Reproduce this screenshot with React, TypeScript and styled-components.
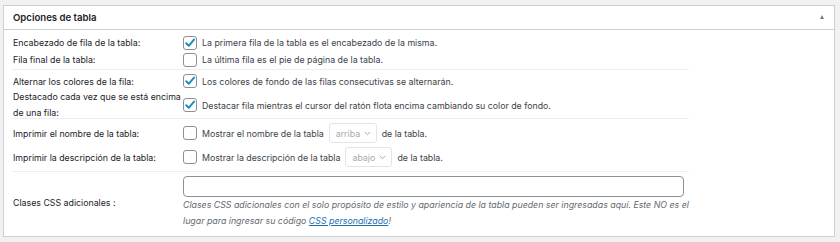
import React from "react";
import styled, { createGlobalStyle } from "styled-components";

const Global = createGlobalStyle`
  html, body { margin: 0; padding: 0; background: #f1f1f1; }
  body { font-family: Inter, "Liberation Sans", Arial, sans-serif; font-size: 8.8px; color: #3c434a; }
  #root { width: 840px; height: 242px; }
`;

const Panel = styled.section`
  margin: 5px 5px 0 3px;
  background: #fff;
  border: 1px solid #ccd0d4;
  box-sizing: border-box;
  height: 232px;
  overflow: hidden;
`;

const Header = styled.header`
  height: 23px;
  border-bottom: 1px solid #ccd0d4;
  display: flex;
  align-items: center;
  justify-content: space-between;
  padding: 0 10px 0 9px;
`;

const Title = styled.h2`
  margin: 0;
  font-size: 9.6px;
  font-weight: 600;
  color: #1d2327;
`;

const Toggle = styled.span`
  width: 0;
  height: 0;
  border-left: 2.5px solid transparent;
  border-right: 2.5px solid transparent;
  border-bottom: 4px solid #787c82;
  margin-top: -1px;
`;

const Body = styled.div`
  padding: 0 0 0 8px;
`;

const Group = styled.div<{ $pt: number; $pb: number; $gap?: number; $last?: boolean }>`
  width: 677px;
  padding: ${(p) => p.$pt}px 0 ${(p) => p.$pb}px;
  border-bottom: ${(p) => (p.$last ? "none" : "1px solid #eeeeee")};
  display: flex;
  flex-direction: column;
  gap: ${(p) => p.$gap ?? 0}px;
`;

const Row = styled.div<{ $h?: number }>`
  display: grid;
  grid-template-columns: 171px 1fr;
  align-items: center;
  height: ${(p) => p.$h ?? 17}px;
`;

const Label = styled.div<{ $lh?: number }>`
  padding-left: 1px;
  color: #1d2327;
  white-space: nowrap;
  line-height: ${(p) => p.$lh ?? 15}px;
`;

const Control = styled.div`
  display: flex;
  align-items: center;
  gap: 5px;
  white-space: nowrap;
`;

const Box = styled.span`
  width: 14px;
  height: 14px;
  box-sizing: border-box;
  border: 1px solid #8c8f94;
  border-radius: 3px;
  background: #fff;
  display: inline-flex;
  align-items: center;
  justify-content: center;
  flex: none;
`;

const Select = styled.span<{ $w: number }>`
  width: ${(p) => p.$w}px;
  height: 20px;
  box-sizing: border-box;
  border: 1px solid #e2e4e7;
  border-radius: 3px;
  display: inline-flex;
  align-items: center;
  justify-content: space-between;
  padding: 0 5px 0 6px;
  color: #a7aaad;
`;

const Column = styled.div`
  display: flex;
  flex-direction: column;
`;

const Input = styled.div`
  width: 501px;
  height: 21px;
  box-sizing: border-box;
  border: 1px solid #8c8f94;
  border-radius: 4px;
  background: #fff;
`;

const Help = styled.p`
  margin: 0;
  font-style: italic;
  color: #646970;
  line-height: 16px;
  white-space: nowrap;
`;

const Link = styled.a`
  color: #2271b1;
  text-decoration: underline;
`;

const Check = ({ on }: { on?: boolean }) => (
  <Box>
    {on && (
      <svg width="12" height="12" viewBox="0 0 12 12">
        <path d="M2.2 6.2 L4.8 8.8 L10 2.6" fill="none" stroke="#1e8cbe" strokeWidth="2" strokeLinecap="round" strokeLinejoin="round" />
      </svg>
    )}
  </Box>
);

const Chevron = () => (
  <svg width="7" height="5" viewBox="0 0 7 5">
    <path d="M0.8 1 L3.5 3.7 L6.2 1" fill="none" stroke="#a7aaad" strokeWidth="1" />
  </svg>
);

export default function App() {
  return (
    <>
      <Global />
      <Panel>
        <Header>
          <Title>Opciones de tabla</Title>
          <Toggle />
        </Header>
        <Body>
          <Group $pt={4} $pb={1}>
            <Row>
              <Label>Encabezado de fila de la tabla:</Label>
              <Control>
                <Check on />
                <span>La primera fila de la tabla es el encabezado de la misma.</span>
              </Control>
            </Row>
            <Row>
              <Label>Fila final de la tabla:</Label>
              <Control>
                <Check />
                <span>La última fila es el pie de página de la tabla.</span>
              </Control>
            </Row>
          </Group>
          <Group $pt={3} $pb={0}>
            <Row $h={16}>
              <Label>Alternar los colores de la fila:</Label>
              <Control>
                <Check on />
                <span>Los colores de fondo de las filas consecutivas se alternarán.</span>
              </Control>
            </Row>
            <Row $h={29}>
              <Label $lh={16}>
                Destacado cada vez que se está encima
                <br />
                de una fila:
              </Label>
              <Control>
                <Check on />
                <span>Destacar fila mientras el cursor del ratón flota encima cambiando su color de fondo.</span>
              </Control>
            </Row>
          </Group>
          <Group $pt={4} $pb={4} $gap={4}>
            <Row $h={20}>
              <Label>Imprimir el nombre de la tabla:</Label>
              <Control>
                <Check />
                <span>Mostrar el nombre de la tabla</span>
                <Select $w={48}>
                  arriba <Chevron />
                </Select>
                <span>de la tabla.</span>
              </Control>
            </Row>
            <Row $h={20}>
              <Label>Imprimir la descripción de la tabla:</Label>
              <Control>
                <Check />
                <span>Mostrar la descripción de la tabla</span>
                <Select $w={47}>
                  abajo <Chevron />
                </Select>
                <span>de la tabla.</span>
              </Control>
            </Row>
          </Group>
          <Group $pt={3} $pb={0} $last>
            <Row $h={54}>
              <Label>Clases CSS adicionales :</Label>
              <Column>
                <Input />
                <Help>
                  Clases CSS adicionales con el solo propósito de estilo y apariencia de la tabla pueden ser ingresadas aquí. Este NO es el
                  <br />
                  lugar para ingresar su código <Link href="#">CSS personalizado</Link>!
                </Help>
              </Column>
            </Row>
          </Group>
        </Body>
      </Panel>
    </>
  );
}
